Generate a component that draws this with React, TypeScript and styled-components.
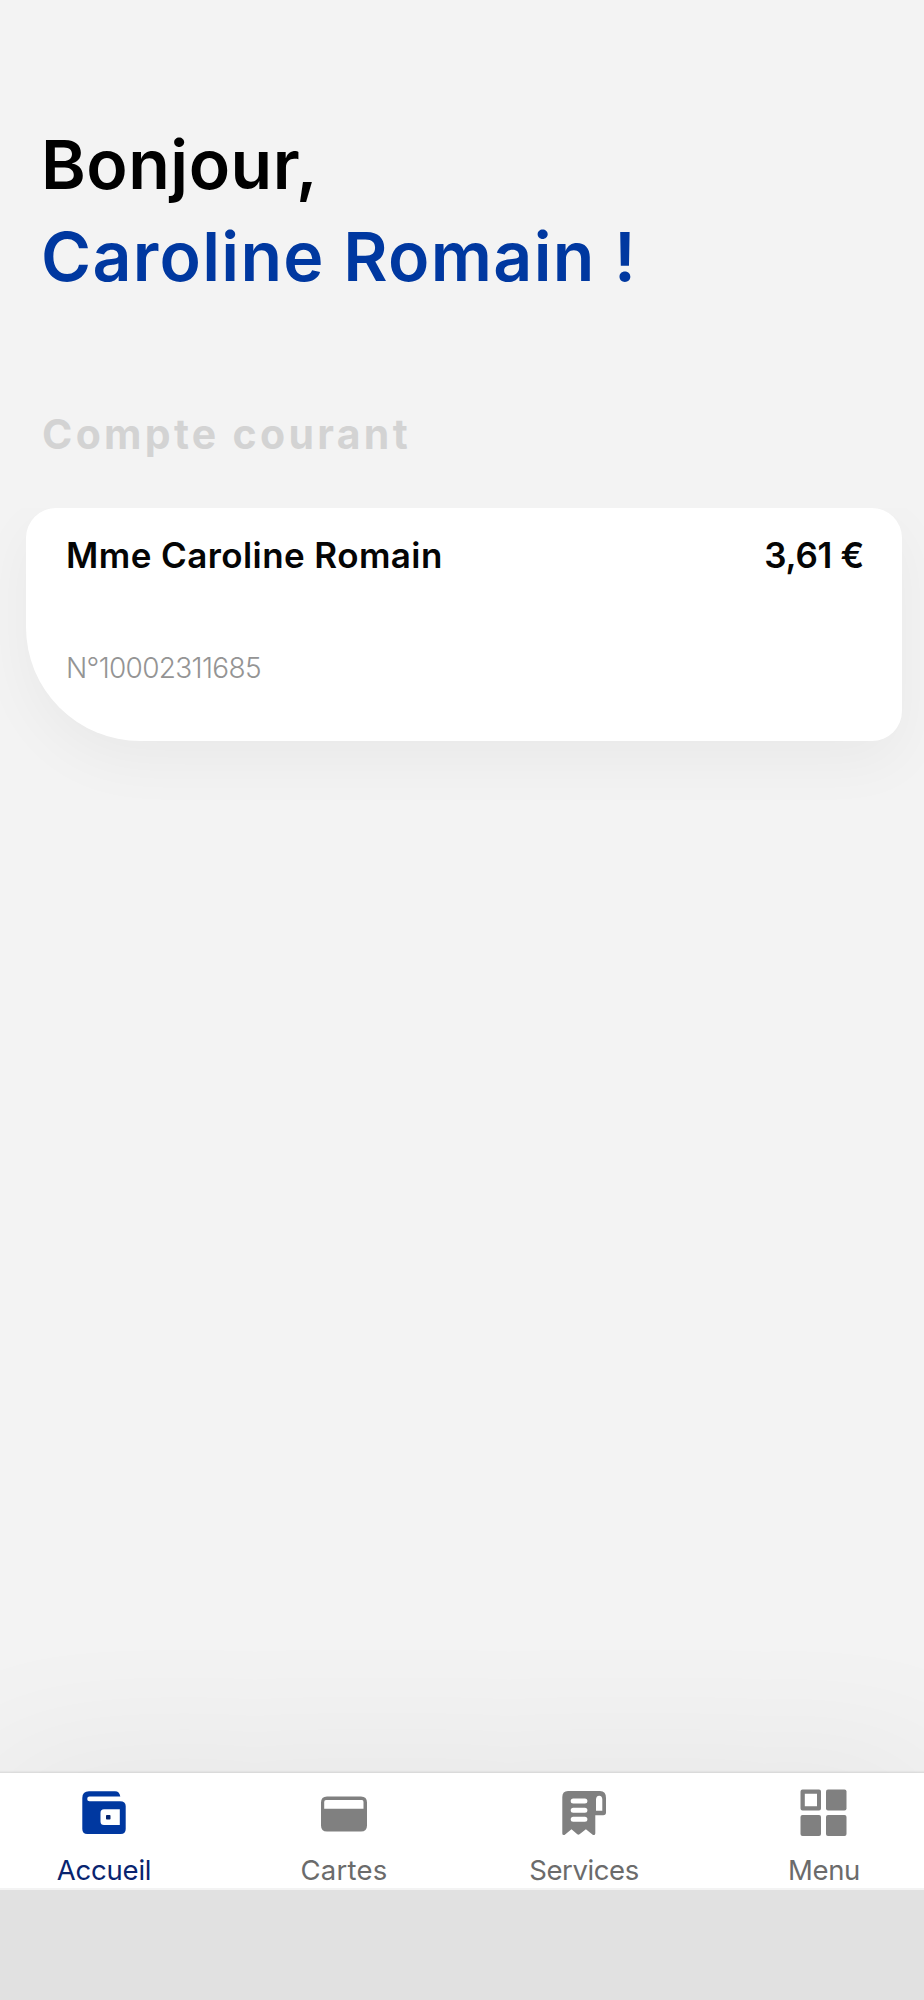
import React from 'react';
import styled, { createGlobalStyle } from 'styled-components';

const GlobalStyle = createGlobalStyle`
  * { box-sizing: border-box; }
  body { margin: 0; background: #f3f3f3; font-family: Inter, "Liberation Sans", sans-serif; }
`;

const Screen = styled.div`
  display: flex;
  flex-direction: column;
  width: 100%;
  height: 2000px;
  overflow: hidden;
  background: #f3f3f3;
`;

const Greeting = styled.h1`
  display: flex;
  flex-direction: column;
  margin: 0;
  padding: 118px 41px 0;
  font-size: 68px;
  line-height: 92px;
  font-weight: 600;
`;

const GreetingLine = styled.span<{ $color: string; $spacing: number }>`
  color: ${p => p.$color};
  letter-spacing: ${p => p.$spacing}px;
  white-space: nowrap;
`;

const SectionTitle = styled.h2`
  margin: 108px 0 0;
  padding: 0 42px;
  color: #d3d3d3;
  font-size: 41px;
  line-height: 48px;
  font-weight: 700;
  letter-spacing: 3.3px;
`;

const Accounts = styled.section`
  flex: 1;
  margin-top: 50px;
  padding: 0 22px 0 26px;
  overflow: hidden;
`;

const AccountCard = styled.article`
  display: flex;
  flex-direction: column;
  height: 233px;
  padding: 26px 38px 0 40px;
  border-radius: 30px 30px 30px 114px;
  background: #fff;
  box-shadow: 0 20px 60px rgba(0, 0, 0, 0.045);
`;

const CardHead = styled.div`
  display: flex;
  justify-content: space-between;
  color: #050505;
  font-size: 35px;
  line-height: 42px;
  font-weight: 600;
  white-space: nowrap;
`;

const Owner = styled.span`
  letter-spacing: 0.42px;
`;

const Balance = styled.span`
  letter-spacing: -0.3px;
`;

const AccountNumber = styled.span`
  margin-top: 75px;
  color: #949494;
  font-size: 28px;
  line-height: 34px;
  font-weight: 300;
  letter-spacing: -0.68px;
`;

const TabBar = styled.nav`
  display: flex;
  justify-content: center;
  flex: none;
  height: 117px;
  margin: 0 -20px 0 -16px;
  border-bottom: 2px solid #f3f3f3;
  background: #fff;
  box-shadow: 0 -1px 2px rgba(0, 0, 0, 0.11), 0 0 160px rgba(0, 0, 0, 0.07);
`;

const Tab = styled.a<{ $active?: boolean; $spacing: number }>`
  display: flex;
  flex: none;
  flex-direction: column;
  align-items: center;
  width: 240px;
  padding-top: 15px;
  color: ${p => (p.$active ? '#08246f' : '#6b6b6b')};
  font-size: 27.5px;
  line-height: 34px;
  letter-spacing: ${p => p.$spacing}px;

  svg {
    display: block;
    width: 50px;
    height: 50px;
    margin-bottom: 15px;
  }
`;

const SystemBar = styled.footer`
  position: relative;
  flex: none;
  height: 110px;
  background: #e1e1e1;
`;

const WalletIcon = () => (
  <svg viewBox="0 0 50 50">
    <path fill="#0038a0" fillRule="evenodd" d="M10 3.3H36Q40.5 3.3 41.3 8.6H10.5a2.3 2.3 0 0 0 0 4.6H41Q46.7 13.2 46.7 18V41Q46.7 46 41.7 46H8.3Q3.3 46 3.3 41V10Q3.3 3.3 10 3.3ZM25 21.3Q21.5 21.3 21.5 25V33.5Q21.5 37 25 37H40.8V21.3Z" />
    <rect x="27" y="27" width="4.5" height="4.5" rx=".8" fill="#04246f" />
  </svg>
);

const CardIcon = () => (
  <svg viewBox="0 0 50 50">
    <path fill="#808080" fillRule="evenodd" d="M8 8.5H42Q48 8.5 48 14.5V37.5Q48 43.5 42 43.5H8Q2 43.5 2 37.5V14.5Q2 8.5 8 8.5ZM7 12Q5.2 12 5.2 14V20.8H44.5V14Q44.5 12 43 12Z" />
  </svg>
);

const ReceiptIcon = () => (
  <svg viewBox="0 0 50 50">
    <path fill="#808080" fillRule="evenodd" d="M9 3H41Q47 3 47 10V24.5Q47 27.3 44.2 27.3H36.3V45.5Q36.3 47.5 34 47L26.9 41.3L20.5 46.3Q19.4 47.2 18.3 46.3L12.5 41.3L5.5 47Q3.3 47.5 3.3 45.5V9Q3.3 3 9 3ZM37 22.8H43.3V11.5Q43.3 7.7 40.2 7.7T37 11.5Z" />
    <path stroke="#fff" strokeWidth="5" strokeLinecap="round" d="M14.2 12.9H25.9M14.2 22.3H25.9M14.2 31.3H25.9" />
  </svg>
);

const GridIcon = () => (
  <svg viewBox="0 0 50 50" fill="#808080">
    <path fillRule="evenodd" d="M3.5 1.5H20Q22 1.5 22 3.5V20.5Q22 22.5 20 22.5H3.5Q1.5 22.5 1.5 20.5V3.5Q1.5 1.5 3.5 1.5ZM5.8 5.8V18.2H18V5.8Z" />
    <rect x="27" y="1.5" width="20.5" height="21" rx="2" />
    <rect x="1.5" y="27" width="20.5" height="21" rx="2" />
    <rect x="27" y="27" width="20.5" height="21" rx="2" />
  </svg>
);

const tabs = [
  { label: 'Accueil', Icon: WalletIcon, spacing: -0.2, active: true },
  { label: 'Cartes', Icon: CardIcon, spacing: 0.25 },
  { label: 'Services', Icon: ReceiptIcon, spacing: -0.4 },
  { label: 'Menu', Icon: GridIcon, spacing: -0.4 },
];

export default function App() {
  return (
    <Screen>
      <GlobalStyle />
      <Greeting>
        <GreetingLine $color="#000" $spacing={0.5}>Bonjour,</GreetingLine>
        <GreetingLine $color="#0038a0" $spacing={1.3}>Caroline Romain !</GreetingLine>
      </Greeting>
      <SectionTitle>Compte courant</SectionTitle>
      <Accounts>
        <AccountCard>
          <CardHead>
            <Owner>Mme Caroline Romain</Owner>
            <Balance>3,61 €</Balance>
          </CardHead>
          <AccountNumber>N°10002311685</AccountNumber>
        </AccountCard>
      </Accounts>
      <TabBar>
        {tabs.map(({ label, Icon, spacing, active }) => (
          <Tab key={label} $active={active} $spacing={spacing}>
            <Icon />
            {label}
          </Tab>
        ))}
      </TabBar>
      <SystemBar />
    </Screen>
  );
}
